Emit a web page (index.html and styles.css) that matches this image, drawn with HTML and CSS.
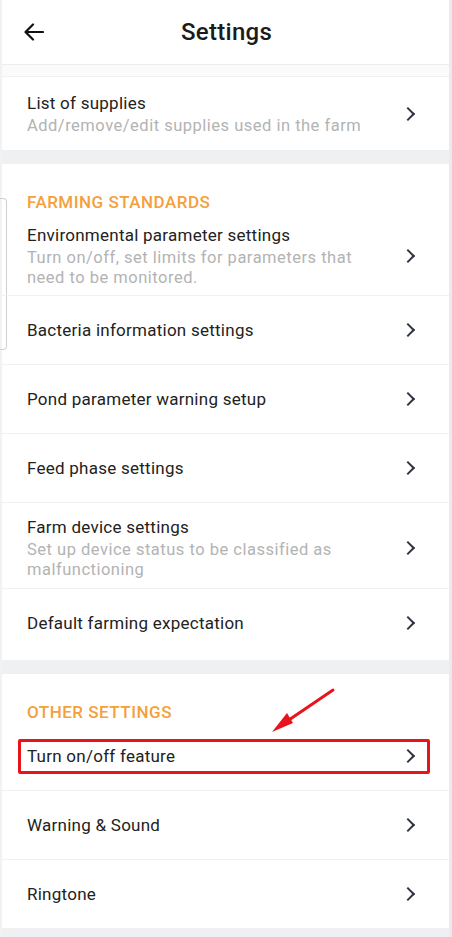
FILE: index.html
```html
<!DOCTYPE html>
<html lang="en">
<head>
    <meta charset="UTF-8">
    <meta name="viewport" content="width=device-width, initial-scale=1.0">
    <title>Settings</title>
    <link rel="stylesheet" href="styles.css">
</head>
<body>
    <div class="app">
        <header class="topbar">
            <svg class="back" width="20" height="18" viewBox="0 0 20 18">
                <path d="M19 9H2M9 1.5L1.5 9 9 16.5" fill="none" stroke="#111" stroke-width="2.2" stroke-linecap="round" stroke-linejoin="round"/>
            </svg>
            <h1>Settings</h1>
        </header>
        <div class="scroll-gap"></div>

        <div class="group">
            <a class="row two" href="#">
                <div class="text">
                    <div class="title">List of supplies</div>
                    <div class="sub">Add/remove/edit supplies used in the farm</div>
                </div>
                <span class="chev"></span>
            </a>
        </div>

        <div class="group farming">
            <span class="side-tab"></span>
            <div class="group-head">FARMING STANDARDS</div>
            <a class="row three first" href="#">
                <div class="text">
                    <div class="title">Environmental parameter settings</div>
                    <div class="sub">Turn on/off, set limits for parameters that need to be monitored.</div>
                </div>
                <span class="chev"></span>
            </a>
            <a class="row" href="#">
                <div class="text"><div class="title">Bacteria information settings</div></div>
                <span class="chev"></span>
            </a>
            <a class="row" href="#">
                <div class="text"><div class="title">Pond parameter warning setup</div></div>
                <span class="chev"></span>
            </a>
            <a class="row" href="#">
                <div class="text"><div class="title">Feed phase settings</div></div>
                <span class="chev"></span>
            </a>
            <a class="row three" href="#">
                <div class="text">
                    <div class="title">Farm device settings</div>
                    <div class="sub">Set up device status to be classified as malfunctioning</div>
                </div>
                <span class="chev"></span>
            </a>
            <a class="row" href="#">
                <div class="text"><div class="title">Default farming expectation</div></div>
                <span class="chev"></span>
            </a>
        </div>

        <div class="group other">
            <svg class="pointer" width="80" height="60" viewBox="0 0 80 60">
                <path d="M73 8L20 44" stroke="#e8141b" stroke-width="3" stroke-linecap="round"/>
                <path d="M12 50L27 31 33 41Z" fill="#e8141b"/>
            </svg>
            <div class="group-head">OTHER SETTINGS</div>
            <a class="row marked" href="#">
                <div class="text"><div class="title">Turn on/off feature</div></div>
                <span class="chev"></span>
            </a>
            <a class="row" href="#">
                <div class="text"><div class="title">Warning &amp; Sound</div></div>
                <span class="chev"></span>
            </a>
            <a class="row" href="#">
                <div class="text"><div class="title">Ringtone</div></div>
                <span class="chev"></span>
            </a>
        </div>
    </div>
</body>
</html>
```

FILE: styles.css
```css
body {
    margin: 0;
    font-family: Roboto, "Liberation Sans", sans-serif;
    background: #eef0f1;
}
.app {
    position: relative;
    width: 447px;
    border-left: 2px solid #f2f2f2;
    border-right: 3px solid #ebebeb;
    background: #eef0f1;
    min-height: 937px;
}

/* header */
.topbar {
    position: relative;
    height: 64px;
    background: #fff;
    border-bottom: 1px solid #ececec;
    display: flex;
    align-items: center;
    justify-content: center;
}
.topbar .back {
    position: absolute;
    left: 22px;
    top: 23px;
}
.topbar h1 {
    margin: 0 0 0 2px;
    font-size: 24px;
    font-weight: 500;
    color: #1b1b1b;
    letter-spacing: 0.3px;
}
.scroll-gap {
    height: 11px;
    background: #fbfbfb;
    border-bottom: 1px solid #f0f0f0;
}

/* groups */
.group {
    position: relative;
    background: #fff;
    margin-bottom: 14px;
}
.group-head {
    padding: 28px 25px 0;
    line-height: 20px;
    font-size: 17px;
    font-weight: 500;
    color: #f4a03c;
    letter-spacing: 0.5px;
}
.other .group-head {
    padding-top: 28px;
}
.row {
    display: flex;
    align-items: center;
    padding: 23px 34px 23px 25px;
    border-bottom: 1px solid #f0f0f0;
    text-decoration: none;
    position: relative;
}
.row:last-child {
    border-bottom: none;
}
.farming .row:last-child {
    padding-bottom: 26px;
}
.row.two {
    padding-top: 15px;
    padding-bottom: 14px;
}
.row.three {
    padding-top: 13px;
    padding-bottom: 8px;
}
.row.three.first {
    padding-top: 12px;
    padding-bottom: 7px;
}
.text {
    flex: 1;
    padding-right: 36px;
}
.title {
    font-size: 17px;
    line-height: 22px;
    color: #222;
    letter-spacing: 0.25px;
}
.sub {
    margin-top: 2px;
    font-size: 16.5px;
    line-height: 20px;
    color: #b3b3b3;
    letter-spacing: 0.5px;
}
.chev {
    width: 8px;
    height: 8px;
    border-top: 2px solid #2f3440;
    border-right: 2px solid #2f3440;
    transform: rotate(45deg);
    margin-right: 2px;
}

/* annotations */
.row.marked::after {
    content: "";
    position: absolute;
    left: 16px;
    right: 19px;
    top: 17px;
    bottom: 16px;
    border: 3px solid #e8141b;
    border-radius: 2px;
}
.pointer {
    position: absolute;
    left: 258px;
    top: 8px;
}
.side-tab {
    position: absolute;
    left: -2px;
    top: 34px;
    width: 6px;
    height: 150px;
    border: 1px solid #cfcfcf;
    border-left: none;
    border-radius: 0 4px 4px 0;
}
```
